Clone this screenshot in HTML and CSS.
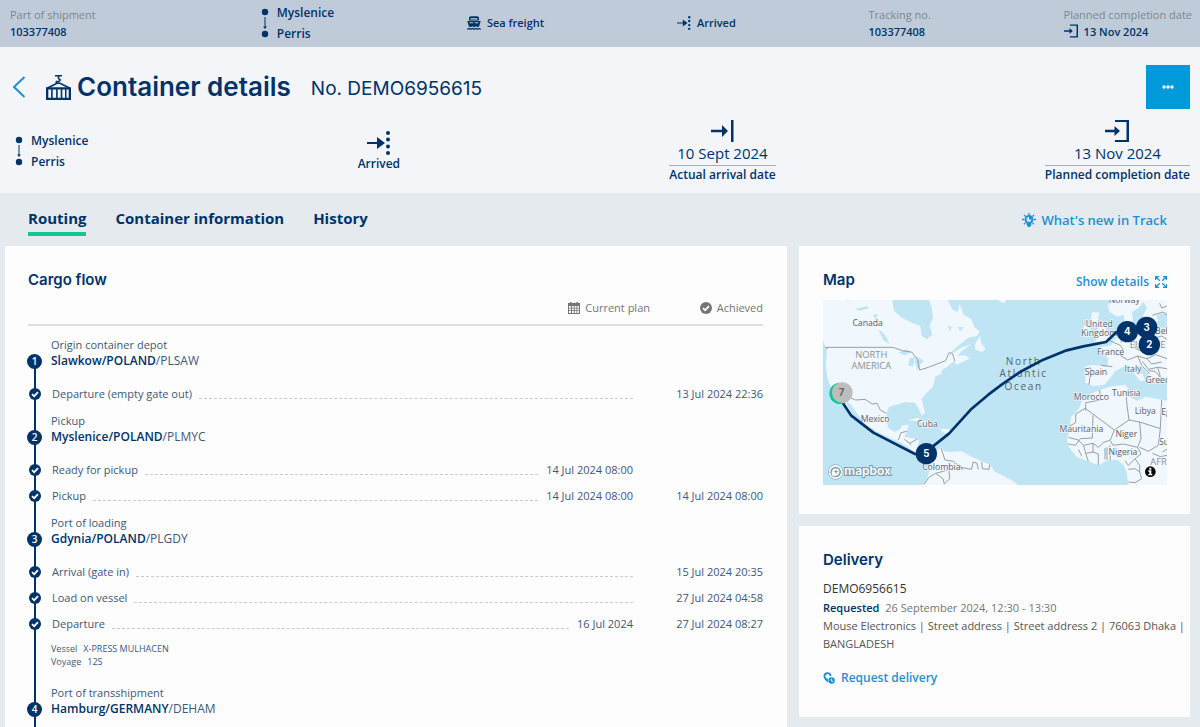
FILE: index.html
```html
<!DOCTYPE html>
<html lang="en">
<head>
    <meta charset="UTF-8">
    <meta name="viewport" content="width=device-width, initial-scale=1.0">
    <title>Container details</title>
    <link rel="stylesheet" href="styles.css">
</head>
<body>
    <!-- Shared icons -->
    <svg class="sprite" aria-hidden="true">
        <symbol id="icon-route" viewBox="0 0 8 30">
            <circle cx="4" cy="4" r="3.2"/>
            <path d="M3.500 9h1v9.500H6L4 21l-2-2.500h1.500z"/>
            <circle cx="4" cy="26" r="3.2"/>
        </symbol>
        <symbol id="icon-arrived" viewBox="0 0 24 24">
            <path d="M0 11h10V6l8 6-8 6v-5H0z"/>
            <circle cx="21" cy="2" r="2"/>
            <circle cx="21" cy="8.500" r="2"/>
            <circle cx="21" cy="15.500" r="2"/>
            <circle cx="21" cy="22" r="2"/>
        </symbol>
        <symbol id="icon-arrival" viewBox="0 0 24 24">
            <path d="M1 10.800h11V6l6 6-6 6v-4.800H1zM21 1h2.500v22H21z"/>
        </symbol>
        <symbol id="icon-completion" viewBox="0 0 24 24">
            <path d="M0 10.800h9.500V7l5.500 5-5.500 5v-3.800H0z"/>
            <path d="M10 1h14v22H10v-2h11.500V3H10z"/>
        </symbol>
        <symbol id="icon-check" viewBox="0 0 12 12">
            <circle cx="6" cy="6" r="6"/>
            <path class="tick" d="M3 6.200l2.200 2L9 4.200"/>
        </symbol>
    </svg>

    <div class="page">
        <div class="shipment-bar">
            <div class="bar-item bar-first">
                <span class="muted">Part of shipment</span>
                <strong>103377408</strong>
            </div>
            <div class="route">
                <svg class="icon-route"><use href="#icon-route"/></svg>
                <div>
                    <div>Myslenice</div>
                    <div>Perris</div>
                </div>
            </div>
            <div class="bar-status">
                <svg class="icon-small" viewBox="0 0 14 14">
                    <path d="M3.500.3h7l1.500 1v3.200H2V1.300z"/>
                    <path class="windows" d="M3.500 2.200h7v1.300h-7z"/>
                    <path d="M.3 5h13.400l-1.500 5.300-1.700.9-1.700-.9-1.800.9-1.800-.9-1.700.9-1.700-.9z"/>
                    <path class="windows" d="M2.500 6.300h3.700v1H2.500zM7.800 6.300h3.700v1H7.800z"/>
                    <path class="stroke" d="M.3 13.300l1.700-.8 1.700.8 1.700-.8 1.600.8 1.700-.8 1.600.8 1.700-.8 1.700.8"/>
                </svg>
                <span>Sea freight</span>
            </div>
            <div class="bar-status">
                <svg class="icon-small"><use href="#icon-arrived"/></svg>
                <span>Arrived</span>
            </div>
            <div class="bar-item">
                <span class="muted">Tracking no.</span>
                <strong>103377408</strong>
            </div>
            <div class="bar-item">
                <span class="muted">Planned completion date</span>
                <strong class="bar-date">
                    <svg class="icon-small"><use href="#icon-completion"/></svg>
                    13 Nov 2024
                </strong>
            </div>
        </div>

        <header class="header">
            <div class="title-row">
                <a class="back" href="#" aria-label="Back">
                    <svg viewBox="0 0 14 22"><path d="M12.500 1L2 11l10.500 10"/></svg>
                </a>
                <svg class="icon-container" viewBox="0 0 25 25">
                    <path class="cable" d="M9 .8h7M12.500.8v2.700l1.800 1.500-1.500 1.500h-2.300l-.5 1.500M1.500 13L11 8.300h3L23.500 13"/>
                    <path d="M0 12.200h25V25H0zM2.300 14.500v8.200h2.800v-8.200zM6.700 14.500v8.200h3.400v-8.200zM11.700 14.500v8.200h3v-8.200zM16.300 14.500v8.200h2.700v-8.200zM20.500 14.500v8.200h2.200v-8.200z" fill-rule="evenodd"/>
                </svg>
                <h1>Container details</h1>
                <span class="container-no">No. DEMO6956615</span>
                <button class="more" type="button" aria-label="More actions">
                    <svg viewBox="0 0 12 4">
                        <circle cx="2" cy="2" r="1.700"/>
                        <circle cx="6" cy="2" r="1.700"/>
                        <circle cx="10" cy="2" r="1.700"/>
                    </svg>
                </button>
            </div>
            <div class="status-row">
                <div class="route">
                    <svg class="icon-route"><use href="#icon-route"/></svg>
                    <div>
                        <div>Myslenice</div>
                        <div>Perris</div>
                    </div>
                </div>
                <div class="status">
                    <svg class="icon-big"><use href="#icon-arrived"/></svg>
                    <span class="status-label">Arrived</span>
                </div>
                <div class="status">
                    <svg class="icon-big"><use href="#icon-arrival"/></svg>
                    <span class="status-date">10 Sept 2024</span>
                    <span class="status-label lined">Actual arrival date</span>
                </div>
                <div class="status">
                    <svg class="icon-big"><use href="#icon-completion"/></svg>
                    <span class="status-date">13 Nov 2024</span>
                    <span class="status-label lined">Planned completion date</span>
                </div>
            </div>
        </header>

        <nav class="tabs">
            <a class="tab active" href="#">Routing</a>
            <a class="tab" href="#">Container information</a>
            <a class="tab" href="#">History</a>
            <a class="link whats-new" href="#">
                <svg viewBox="0 0 14 14">
                    <path class="stroke" d="M7 0v2M2 2l1.600 1.600M12 2l-1.600 1.600M0 6.500h2.200M11.800 6.500H14M2 11.200l1.600-1.600M12 11.200l-1.600-1.600"/>
                    <path d="M7 2a4.500 4.500 0 0 0-2.300 8.300V12L6 14h2l1.300-2v-1.700A4.500 4.500 0 0 0 7 2zM7 4v2.600h2.500A2.500 2.500 0 1 1 7 4z" fill-rule="evenodd"/>
                </svg>
                What's new in Track
            </a>
        </nav>

        <main class="content">
            <section class="card cargo">
                <h2>Cargo flow</h2>
                <div class="legend">
                    <span class="legend-item">
                        <svg viewBox="0 0 12 12">
                            <path d="M0 1h2V0h1.500v1h5V0H10v1h2v11H0zM1 4v1.700h2V4zM4 4v1.700h1.800V4zM6.700 4v1.700h1.800V4zM9.300 4v1.700H11V4zM1 6.500v1.700h2V6.500zM4 6.500v1.700h1.800V6.500zM6.700 6.500v1.700h1.800V6.500zM9.300 6.500v1.700H11V6.500zM1 9v2h2V9zM4 9v2h1.800V9zM6.700 9v2h1.800V9zM9.300 9v2H11V9z" fill-rule="evenodd"/>
                        </svg>
                        Current plan
                    </span>
                    <span class="legend-item achieved">
                        <svg><use href="#icon-check"/></svg>
                        Achieved
                    </span>
                </div>

                <ol class="timeline">
                    <li class="stop">
                        <span class="stop-type">Origin container depot</span>
                        <span class="stop-no">1</span>
                        <span class="stop-name"><b>Slawkow/POLAND</b>/PLSAW</span>
                    </li>
                    <li class="event">
                        <svg class="check"><use href="#icon-check"/></svg>
                        <span>Departure (empty gate out)</span>
                        <i class="leader"></i>
                        <time class="done">13 Jul 2024 22:36</time>
                    </li>
                    <li class="stop">
                        <span class="stop-type">Pickup</span>
                        <span class="stop-no">2</span>
                        <span class="stop-name"><b>Myslenice/POLAND</b>/PLMYC</span>
                    </li>
                    <li class="event">
                        <svg class="check"><use href="#icon-check"/></svg>
                        <span>Ready for pickup</span>
                        <i class="leader"></i>
                        <time class="plan">14 Jul 2024 08:00</time>
                        <span class="done"></span>
                    </li>
                    <li class="event">
                        <svg class="check"><use href="#icon-check"/></svg>
                        <span>Pickup</span>
                        <i class="leader"></i>
                        <time class="plan">14 Jul 2024 08:00</time>
                        <time class="done">14 Jul 2024 08:00</time>
                    </li>
                    <li class="stop">
                        <span class="stop-type">Port of loading</span>
                        <span class="stop-no">3</span>
                        <span class="stop-name"><b>Gdynia/POLAND</b>/PLGDY</span>
                    </li>
                    <li class="event">
                        <svg class="check"><use href="#icon-check"/></svg>
                        <span>Arrival (gate in)</span>
                        <i class="leader"></i>
                        <time class="done">15 Jul 2024 20:35</time>
                    </li>
                    <li class="event">
                        <svg class="check"><use href="#icon-check"/></svg>
                        <span>Load on vessel</span>
                        <i class="leader"></i>
                        <time class="done">27 Jul 2024 04:58</time>
                    </li>
                    <li class="event">
                        <svg class="check"><use href="#icon-check"/></svg>
                        <span>Departure</span>
                        <i class="leader"></i>
                        <time class="plan">16 Jul 2024</time>
                        <time class="done">27 Jul 2024 08:27</time>
                    </li>
                    <li class="vessel">
                        <div><span>Vessel</span><span>X-PRESS MULHACEN</span></div>
                        <div><span>Voyage</span><span>12S</span></div>
                    </li>
                    <li class="stop">
                        <span class="stop-type">Port of transshipment</span>
                        <span class="stop-no">4</span>
                        <span class="stop-name"><b>Hamburg/GERMANY</b>/DEHAM</span>
                    </li>
                </ol>
            </section>

            <div class="side">
                <section class="card">
                    <div class="card-head">
                        <h2>Map</h2>
                        <a class="link" href="#">
                            Show details
                            <svg viewBox="0 0 12 12">
                                <path class="stroke" d="M.6 4V.6H4M8 .6h3.400V4M11.400 8v3.400H8M4 11.400H.6V8M1 1l3.800 3.800M11 1L7.200 4.800M11 11L7.200 7.200M1 11l3.800-3.800"/>
                            </svg>
                        </a>
                    </div>
                    <svg class="map" viewBox="24 104 1032 555" role="img" aria-label="Route map">
                        <!-- Americas -->
                        <path class="land" d="M24 104H232L236 135 258 156 290 172 316 182 320 212 335 222 352 208 344 180 354 158 350 126 342 104H398L412 132 428 140 434 116 446 148 468 160 478 186 494 198 486 212 462 216 440 232 418 252 400 272 436 248 470 236 440 258 428 272 450 270 465 280 442 290 426 298 416 288 400 302 384 312 378 326 360 334 358 350 352 366 334 384 320 400 326 425 330 444 320 450 308 425 300 412 270 410 244 418 222 424 215 445 215 470 222 490 240 500 256 490 262 480 282 478 275 500 268 514 290 518 312 525 308 548 325 560 340 562 350 574 340 580 320 578 300 568 280 545 255 530 225 518 180 496 150 476 130 450 105 415 90 402 100 426 118 456 104 444 84 412 74 395 50 370 38 340 32 300 36 260 28 235 24 228Z"/>
                        <path class="land" d="M338 588L350 574 362 558 380 545 386 556 402 560 440 558 466 572 500 588 525 598 540 620 574 636 590 659H325L336 640 345 612ZM278 464L308 458 348 478 340 484 308 468ZM374 490L400 490 412 500 388 504ZM480 236L495 212 500 236 512 252 500 260 480 252ZM548 104H574L566 114Z"/>
                        <path class="land" d="M555 634L586 642 610 659H545Z"/>
                        <!-- Europe -->
                        <path class="land" d="M833 140L854 142 848 160 868 180 878 204 892 212 876 228 838 230 850 214 838 206 850 190 836 176 828 156ZM806 182L824 178 828 210 808 214ZM884 140L878 120 905 104H1056V140L1024 150 1030 168 1010 176 988 178 984 148 996 128 986 110 970 128 950 140 954 165 942 180 928 168 926 148 908 154ZM855 246L888 240 896 224 924 208 934 190 928 176 945 174 950 200 1056 186V348L1036 340 1024 356 1006 338 988 312 970 300 960 308 984 328 990 344 976 348 960 328 944 302 922 306 900 318 888 336 868 358 836 362 812 352 808 304 830 298 876 304 880 280 862 262Z"/>
                        <!-- Africa -->
                        <path class="land" d="M762 500L768 456 792 430 802 404 830 384 856 374 884 364 930 358 942 372 936 390 966 406 992 394 1056 406V659H940L936 626 926 600 908 584 880 584 850 600 820 588 786 576 762 546 756 520Z"/>
                        <!-- Inland water -->
                        <path class="water" d="M122 130L160 122 158 130 130 136ZM190 192L202 200 216 218 222 236 206 226 196 206ZM176 145L188 148 180 165ZM250 262L274 252 290 262 268 270ZM284 278L300 276 294 304 280 300ZM304 272L326 286 316 296 308 316 300 290ZM398 180L410 186 404 198ZM428 184L446 186 436 198ZM92 104H104L98 107Z"/>
                        <!-- Borders -->
                        <path class="border" d="M30 246H234L262 256 290 260 308 284 314 314 340 306 366 296 392 286 402 262 412 264 420 288M32 252L40 246M108 398L122 404 150 402 172 416 186 414 196 434 214 444M250 524L258 502 276 498M268 522L284 534 306 522M288 540L280 530M378 548L390 584 416 588 436 606 470 612 474 590 486 594 490 612M500 590L502 610 522 612 524 598M434 598L442 614M328 656L342 636 362 624 398 614 404 590M362 624L384 640 388 656 404 640 402 616"/>
                        <path class="border" d="M808 310L828 308 822 358M858 300L892 304M884 226L916 240 924 252 916 270 938 284 968 272 996 280 1022 268 1056 280M924 206L918 232M958 222L962 250 990 262M982 288L1000 312 1028 306 1056 310M996 280L1010 296 1040 290M968 272L980 300 1004 326M1028 306L1036 334M1014 220L1040 212 1056 222M1000 176L1024 184 1032 200M1012 150L1044 140 1056 150M1034 114L1040 128 1056 122M1000 316L1020 318 1036 336"/>
                        <path class="border" d="M812 436L812 412 856 404 854 374M812 428L782 446 782 472 764 482M812 430L898 494 942 464 936 420 934 396 940 372M942 464L974 470 1036 490 1040 404M834 450L832 518 796 520 782 540 760 536M760 516L790 524 806 540 834 534 850 546 864 532 886 524 898 494M974 470L978 520 968 546 978 566 960 580 940 600 930 586M974 546L1000 558 1030 540 1036 490M886 526L894 540 926 536 968 546M870 548V582M876 546V584M884 540L886 584M834 560L850 566 850 600M806 540L812 564 834 560 834 534M790 552L800 572M820 588L812 564M940 612L960 610 974 620 980 640 960 652 940 650M960 580L974 600 974 620M1012 564L1036 574 1056 570M1042 560L1056 552"/>

                        <g class="place">
                            <text x="158" y="183">Canada</text>
                            <text x="180" y="469">Mexico</text>
                            <text x="337" y="484">Cuba</text>
                            <text x="379" y="614">Colombia</text>
                            <text x="928" y="112">Norway</text>
                            <text x="853" y="186">United</text>
                            <text x="853" y="213">Kingdom</text>
                            <text x="887" y="268">France</text>
                            <text x="843" y="330">Spain</text>
                            <text x="954" y="320">Italy</text>
                            <text x="1034" y="354">Greece</text>
                            <text x="829" y="405">Morocco</text>
                            <text x="934" y="391">Tunisia</text>
                            <text x="991" y="447">Libya</text>
                            <text x="1072" y="450">Egypt</text>
                            <text x="799" y="500">Mauritania</text>
                            <text x="934" y="516">Niger</text>
                            <text x="924" y="570">Nigeria</text>
                            <text x="1070" y="540">Sudan</text>
                            <text x="1066" y="207">Belarus</text>
                        </g>
                        <g class="continent">
                            <text x="169" y="279">NORTH</text>
                            <text x="169" y="311">AMERICA</text>
                            <text x="998" y="249">EUROPE</text>
                            <text x="1052" y="598">AFRICA</text>
                        </g>
                        <g class="ocean">
                            <text x="626" y="298">North</text>
                            <text x="626" y="336">Atlantic</text>
                            <text x="626" y="374">Ocean</text>
                        </g>

                        <path class="voyage" d="M80 408L108 450 175 502 300 566 334 568 350 546 402 505 470 430 520 388 560 358 615 320 685 283 755 255 805 243 873 230 905 200 937 199"/>
                        <circle class="marker-progress" cx="75" cy="384" r="32"/>
                        <circle class="marker-end" cx="82" cy="382" r="31"/>
                        <g class="marker">
                            <circle cx="334" cy="565" r="32"/>
                            <circle cx="937" cy="199" r="32"/>
                            <circle cx="1003" cy="238" r="32"/>
                            <circle cx="995" cy="186" r="32"/>
                        </g>
                        <g class="marker-no">
                            <text class="end" x="80" y="393">7</text>
                            <text x="334" y="575">5</text>
                            <text x="937" y="209">4</text>
                            <text x="1003" y="248">2</text>
                            <text x="995" y="196">3</text>
                        </g>

                        <g class="mapbox">
                            <circle cx="62" cy="620" r="22"/>
                            <circle class="mapbox-inner" cx="62" cy="620" r="16"/>
                            <path d="M50 632c-3-14 2-24 13-24a11 11 0 0 1 11 11c0 11-10 16-24 13z"/>
                            <path class="mapbox-inner" d="M63 611l2 6 6 2-6 2-2 6-2-6-6-2 6-2z"/>
                            <text x="88" y="630">mapbox</text>
                        </g>
                        <circle class="info-dot" cx="1006" cy="619" r="16"/>
                        <path class="info" d="M1003 607h6v6h-6zM1000 615h9v11h3v4h-12v-4h3v-7h-3z"/>
                    </svg>
                </section>

                <section class="card delivery">
                    <h2>Delivery</h2>
                    <p class="delivery-no">DEMO6956615</p>
                    <p class="requested"><b>Requested</b> 26 September 2024, 12:30 - 13:30</p>
                    <p class="address">Mouse Electronics | Street address | Street address 2 | 76063 Dhaka | BANGLADESH</p>
                    <a class="link" href="#">
                        <svg viewBox="0 0 12 12">
                            <path d="M4.500.3a4 4 0 0 1 4 3.700H6.700a2.200 2.200 0 1 0-1.900 2.500L5 10.800C3 8.800.5 6.800.5 4.300a4 4 0 0 1 4-4z"/>
                            <path d="M8.600 5.300a3.200 3.200 0 1 1 0 6.400 3.200 3.200 0 0 1 0-6.400zM8 6.700v2.200l1.600 1.200.6-.8-1.100-.8V6.700z" fill-rule="evenodd"/>
                        </svg>
                        Request delivery
                    </a>
                </section>
            </div>
        </main>
    </div>
</body>
</html>
```
FILE: styles.css
```css
:root {
    --navy: #003369;
    --text: #3d5878;
    --blue: #0099da;
    --link: #1e90d2;
    --green: #10c891;
    --gray: #757575;
    --line: #dedfe0;
    --page: #e5eaef;
    --bar: #bfcbd9;
    --card: #fdfdfd;
}

* {
    box-sizing: border-box;
}

body {
    margin: 0;
    font-family: "Open Sans", "Noto Sans", sans-serif;
    font-size: 11px;
    line-height: 16px;
    color: var(--navy);
    background: var(--page);
}

h1, h2, p, ol {
    margin: 0;
    padding: 0;
}

a {
    color: inherit;
    text-decoration: none;
}

svg {
    display: block;
    flex: none;
    fill: currentColor;
}

.sprite {
    width: 0;
    height: 0;
    position: absolute;
}

.tick {
    fill: none;
    stroke: white;
    stroke-width: 1.8;
}

.stroke {
    fill: none;
    stroke: currentColor;
    stroke-width: 1.3;
}

.page {
    min-height: 100vh;
    display: flex;
    flex-direction: column;
}

/* Shipment bar */
.shipment-bar {
    display: flex;
    justify-content: space-between;
    align-items: center;
    height: 47px;
    padding: 0 8px 2px 10px;
    background: var(--bar);
}

.bar-item {
    display: flex;
    flex-direction: column;
    line-height: 17px;
}

.bar-first {
    min-width: 118px;
}

.muted {
    color: #7d8791;
}

strong, b {
    font-weight: 600;
}

.bar-date, .bar-status {
    display: flex;
    align-items: center;
    gap: 6px;
    font-weight: 600;
}

.icon-small {
    width: 14px;
    height: 14px;
}

.windows {
    fill: var(--bar);
}

.route {
    display: flex;
    align-items: center;
    gap: 8px;
    font-size: 12px;
    line-height: 21px;
    font-weight: 600;
}

.icon-route {
    width: 8px;
    height: 30px;
}

/* Header */
.header {
    padding: 18px 10px 10px;
    background: #f3f5f8;
}

.title-row {
    display: flex;
    align-items: center;
    height: 44px;
    margin-bottom: 10px;
}

.back svg {
    width: 14px;
    height: 22px;
    margin: 0 20px 0 2px;
    fill: none;
    stroke: var(--link);
    stroke-width: 2;
}

.icon-container {
    width: 25px;
    height: 25px;
    margin-right: 6px;
}

.cable {
    fill: none;
    stroke: currentColor;
    stroke-width: 1.6;
}

h1 {
    font-family: Inter, sans-serif;
    font-size: 26px;
    font-weight: 600;
    margin-right: 20px;
}

.container-no {
    font-family: Inter, sans-serif;
    font-size: 19px;
    padding-top: 3px;
}

.more {
    display: flex;
    align-items: center;
    justify-content: center;
    width: 44px;
    height: 44px;
    margin-left: auto;
    border: none;
    color: white;
    background: var(--blue);
    cursor: pointer;
}

.more svg {
    width: 12px;
    height: 4px;
}

.status-row {
    display: flex;
    justify-content: space-between;
    align-items: center;
    padding-left: 5px;
}

.status {
    display: flex;
    flex-direction: column;
    align-items: center;
    font-weight: 600;
}

.icon-big {
    width: 24px;
    height: 24px;
}

.status-date {
    font-size: 15px;
    line-height: 20px;
    padding-bottom: 2px;
    font-weight: 500;
}

.status-label {
    font-size: 12px;
    line-height: 17px;
}

.lined {
    border-top: 1px solid #a5aebb;
}

/* Tabs */
.tabs {
    display: flex;
    align-items: center;
    gap: 29px;
    height: 53px;
    padding: 0 33px 0 28px;
}

.tab {
    padding: 5px 0 4px;
    border-bottom: 4px solid transparent;
    font-size: 15px;
    line-height: 20px;
    font-weight: 700;
}

.tab.active {
    border-color: var(--green);
}

.link {
    display: flex;
    align-items: center;
    gap: 6px;
    font-size: 12px;
    font-weight: 600;
    line-height: 20px;
    color: var(--link);
}

.link svg {
    width: 12px;
    height: 12px;
}

.whats-new {
    margin-left: auto;
    font-size: 13px;
}

.whats-new svg {
    width: 14px;
    height: 14px;
}

/* Cards */
.content {
    flex: 1;
    display: grid;
    grid-template-columns: 2fr 1fr;
    gap: 12px;
    padding: 0 10px 0 5px;
}

.side {
    display: flex;
    flex-direction: column;
    gap: 12px;
}

.card {
    padding: 24px 23px 29px 24px;
    background: var(--card);
}

h2 {
    font-family: Inter, sans-serif;
    font-size: 15px;
    line-height: 20px;
    font-weight: 600;
}

.cargo {
    display: flex;
    flex-direction: column;
    padding: 24px 24px 0 23px;
}

.legend {
    display: flex;
    justify-content: flex-end;
    margin: 10px 0 11px;
    padding-bottom: 8px;
    border-bottom: 2px solid var(--line);
    color: var(--gray);
}

.legend-item {
    display: flex;
    align-items: center;
    gap: 5px;
}

.legend-item svg {
    width: 12px;
    height: 12px;
}

.achieved {
    width: 113px;
    justify-content: flex-end;
}

/* Timeline, the background draws the vertical line */
.timeline {
    flex: 1;
    margin-left: -1px;
    list-style: none;
    color: var(--text);
    background: linear-gradient(var(--navy), var(--navy)) 7px 20px / 2px 100% no-repeat;
}

.stop {
    display: grid;
    grid-template-columns: 15px 1fr;
    column-gap: 9px;
    align-items: center;
    margin-bottom: 12px;
}

.stop-type {
    grid-column: 2;
}

.stop-no {
    width: 15px;
    height: 15px;
    border-radius: 50%;
    background: var(--navy);
    color: white;
    font-size: 10px;
    line-height: 15px;
    font-weight: 600;
    text-align: center;
}

.stop-name {
    font-size: 12px;
}

.stop-name b {
    color: var(--navy);
}

.event {
    display: flex;
    align-items: center;
    height: 26px;
}

.event + .stop {
    margin-top: 6px;
}

.check {
    width: 12px;
    height: 12px;
    margin: 0 11px 0 2px;
    color: var(--navy);
}

.leader {
    flex: 1;
    height: 10px;
    margin-left: 7px;
    border-bottom: 1px dashed #c8cbce;
}

.plan {
    margin-left: 8px;
}

.done {
    width: 130px;
    text-align: right;
}

.vessel {
    padding: 5px 0 17px 24px;
    font-size: 9px;
    line-height: 13px;
}

.vessel div {
    display: flex;
    gap: 6px;
}

/* Map */
.card-head {
    display: flex;
    justify-content: space-between;
    align-items: flex-end;
    height: 22px;
    margin-bottom: 8px;
}

.card-head h2 {
    align-self: flex-start;
}

.map {
    width: 100%;
    height: auto;
    background: #bfe5f5;
    font-size: 26px;
    text-anchor: middle;
}

.land {
    fill: #f0f7fd;
}

.water {
    fill: #bfe5f5;
}

.border {
    fill: none;
    stroke: #9a9fa4;
    stroke-width: 3;
}

.place, .ocean {
    fill: #5d6166;
}

.place text, .continent text {
    paint-order: stroke;
    stroke: #f0f7fd;
    stroke-width: 4;
}

.continent {
    font-size: 28px;
    fill: #8d9298;
}

.ocean {
    font-size: 30px;
    letter-spacing: 5px;
}

.voyage {
    fill: none;
    stroke: var(--navy);
    stroke-width: 8;
    stroke-linejoin: round;
}

.marker {
    fill: var(--navy);
}

.marker-progress {
    fill: var(--green);
}

.marker-end {
    fill: #bdbdbd;
}

.marker-no {
    font-family: Inter, sans-serif;
    font-size: 29px;
    font-weight: 700;
    fill: white;
}

.marker-no .end {
    fill: #666;
}

.mapbox {
    font-family: Inter, sans-serif;
    font-size: 36px;
    font-weight: 600;
    text-anchor: start;
    fill: white;
    stroke: #7c9aa8;
    stroke-width: 2;
}

.mapbox text {
    paint-order: stroke;
    stroke-width: 6;
}

.mapbox .mapbox-inner {
    fill: #7c9aa8;
    stroke: none;
}

.info-dot {
    fill: black;
}

.info {
    fill: white;
}

/* Delivery */
.delivery {
    padding-right: 4px;
}

.delivery h2 {
    margin-bottom: 9px;
}

.delivery-no {
    font-size: 12px;
    line-height: 20px;
    color: #333;
}

.requested, .address {
    line-height: 18px;
    color: var(--gray);
}

.requested b {
    margin-right: 3px;
    color: var(--navy);
}

.address {
    margin-bottom: 15px;
    color: #555;
}
```
